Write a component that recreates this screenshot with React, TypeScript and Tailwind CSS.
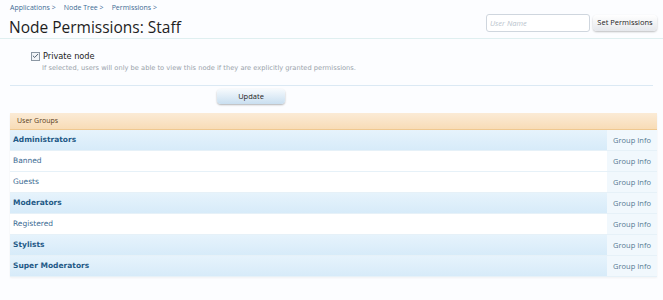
import { Check } from 'lucide-react'

const groups = [
  { name: 'Administrators', strong: true },
  { name: 'Banned', strong: false },
  { name: 'Guests', strong: false },
  { name: 'Moderators', strong: true },
  { name: 'Registered', strong: false },
  { name: 'Stylists', strong: true },
  { name: 'Super Moderators', strong: true },
]

export default function App() {
  return (
    <div className="w-[663px] h-[300px] bg-[#fcfdff] text-[#222] font-['Open_Sans',sans-serif] overflow-hidden">
      <div className="pl-[8px] pr-[6px] pt-[3px] flex items-end justify-between border-b border-[#dfeff0]">
        <div className="pl-[2px]">
          <div className="flex gap-[8px] text-[7px] text-[#3c6b94] leading-[10px]">
            <span>Applications &gt;</span>
            <span>Node Tree &gt;</span>
            <span>Permissions &gt;</span>
          </div>
          <h1 className="text-[15.5px] leading-[22px] mt-[3px] -ml-[1px] text-[#1e1e1e]">Node Permissions: Staff</h1>
        </div>
        <div className="flex items-center gap-[3px] mb-[6px]">
          <input
            placeholder="User Name"
            className="w-[104px] h-[18px] rounded-[3px] border border-[#cfd6de] bg-white px-[3px] text-[7.5px] italic placeholder-[#b9c3cc] outline-none"
          />
          <button className="w-[64px] h-[16px] rounded-[4px] bg-gradient-to-b from-white to-[#e6e8ec] shadow-[0_1px_2px_rgba(0,0,0,0.25)] text-[7.5px] text-[#222]">
            Set Permissions
          </button>
        </div>
      </div>

      <div className="mx-[10px] pt-[11px] pb-[12px] border-b border-[#dbe9f4]">
        <div className="pl-[21px] flex items-center gap-[3px]">
          <span className="w-[9px] h-[9px] border border-[#8c98a4] bg-[#f2f5f8] flex items-center justify-center">
            <Check size={8} strokeWidth={3} className="text-[#3a4a5a]" />
          </span>
          <span className="text-[8.2px] leading-[12px] text-[#222] font-['DejaVu_Sans',sans-serif]">Private node</span>
        </div>
        <p className="pl-[32px] mt-[1px] text-[6.7px] leading-[10px] text-[#9aa3aa] font-['DejaVu_Sans',sans-serif]">
          If selected, users will only be able to view this node if they are explicitly granted permissions.
        </p>
      </div>

      <div className="flex pt-[3px] pl-[217px]">
        <button className="w-[68px] h-[15px] rounded-[4px] bg-gradient-to-b from-[#f6fafd] to-[#c9dff0] shadow-[0_1px_2px_rgba(0,0,0,0.3)] text-[7.5px] text-[#222]">
          Update
        </button>
      </div>

      <div className="mx-[10px] mr-[6px] mt-[9px] shadow-[0_1px_2px_rgba(0,0,0,0.05)]">
        <div className="h-[17px] bg-gradient-to-b from-[#fbebd6] to-[#f8dcb6] border-b border-[#efc890] pl-[7px] text-[7px] leading-[16px] text-[#5a4020]">
          User Groups
        </div>
        {groups.map(g => (
          <div
            key={g.name}
            className={`flex h-[21px] border-b border-[#e6f1f8] ${
              g.strong ? 'bg-gradient-to-b from-[#e6f3fc] to-[#d7ebf9]' : 'bg-white'
            }`}
          >
            <div
              className={`flex-1 pl-[3px] text-[7.5px] leading-[20px] font-['DejaVu_Sans',sans-serif] ${
                g.strong ? 'font-bold text-[#1f5a87]' : 'text-[#3a6a92]'
              }`}
            >
              {g.name}
            </div>
            <div className="w-[50px] bg-[#f1f8fd] text-[7.5px] leading-[20px] text-[#557993] text-center">
              Group Info
            </div>
          </div>
        ))}
      </div>
    </div>
  )
}
